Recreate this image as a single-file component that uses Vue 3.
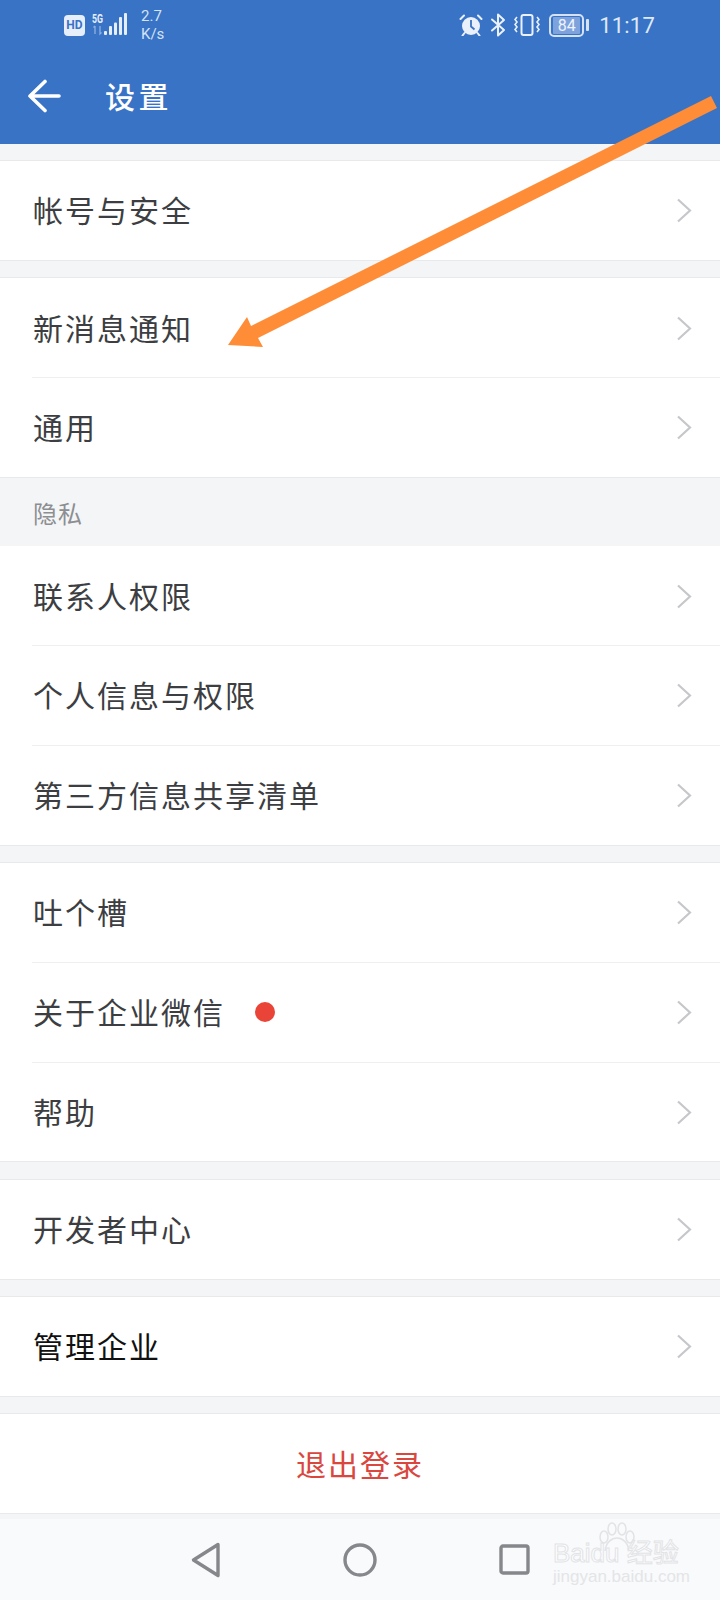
<script setup>
const groups = [
  { rows: [{ label: '帐号与安全' }] },
  { rows: [{ label: '新消息通知' }, { label: '通用' }] },
  { title: '隐私', rows: [{ label: '联系人权限' }, { label: '个人信息与权限' }, { label: '第三方信息共享清单' }] },
  { rows: [{ label: '吐个槽' }, { label: '关于企业微信', dot: true }, { label: '帮助' }] },
  { rows: [{ label: '开发者中心' }] },
  { rows: [{ label: '管理企业', dark: true }] }
]
</script>

<template>
  <div class="page">
    <header class="header">
      <div class="status">
        <span class="hd">HD</span>
        <svg class="signal" width="36" height="24" viewBox="0 0 36 24">
          <text x="0" y="11" textLength="11" lengthAdjust="spacingAndGlyphs" class="five-g">5G</text>
          <path d="M3 14v8M1.500 15.500 3 14M8 14v8l1.500-1.500" fill="none" stroke="#8fb1e2" stroke-width="1.300" />
          <rect x="12" y="19" width="3" height="4" rx="1" fill="#e6eefa" />
          <rect x="17" y="14" width="3" height="9" rx="1" fill="#e6eefa" />
          <rect x="22" y="10.500" width="3" height="12.500" rx="1" fill="#e6eefa" />
          <rect x="27" y="5" width="3" height="18" rx="1" fill="#e6eefa" />
          <rect x="32" y="1" width="3" height="22" rx="1" fill="#e6eefa" />
        </svg>
        <span class="speed">2.7<br>K/s</span>
        <div class="status-right">
          <svg width="24" height="22" viewBox="0 0 24 22">
            <circle cx="12" cy="12" r="9" fill="#eaf1fb" />
            <path d="M12 6v6.500l3.500 3" fill="none" stroke="#3873c5" stroke-width="1.800" />
            <path d="M1.500 5 5 1.500M22.500 5 19 1.500M5.500 19l-2 2.500M18.500 19l2 2.500" fill="none" stroke="#eaf1fb" stroke-width="2" stroke-linecap="round" />
          </svg>
          <svg class="bt" width="16" height="24" viewBox="0 0 16 24">
            <path d="M2 6.500 14 17 8 22.500V1.500l6 5.500L2 17.500" fill="none" stroke="#eaf1fb" stroke-width="2" stroke-linejoin="round" stroke-linecap="round" />
          </svg>
          <svg class="vib" width="26" height="22" viewBox="0 0 26 22">
            <rect x="7.500" y="1" width="11" height="20" rx="2" fill="none" stroke="#eaf1fb" stroke-width="2" />
            <path d="M3 3 1 5.500 3 8 1 10.500 3 13 1 15.500 3 18M23 3l2 2.500L23 8l2 2.500L23 13l2 2.500L23 18" fill="none" stroke="#eaf1fb" stroke-width="1.600" />
          </svg>
          <div class="battery">
            <div class="battery-body"><span>84</span></div>
            <i class="battery-cap"></i>
          </div>
          <span class="clock">11:17</span>
        </div>
      </div>
      <div class="toolbar">
        <svg width="34" height="34" viewBox="0 0 34 34">
          <path d="M18 2.500 3 17l15 14.500M3 17h29" fill="none" stroke="#fff" stroke-width="3.600" stroke-linecap="round" stroke-linejoin="round" />
        </svg>
        <span class="title">设置</span>
      </div>
    </header>

    <main class="list">
      <template v-for="(group, i) in groups" :key="i">
        <div v-if="group.title" class="section-title">{{ group.title }}</div>
        <section class="group" :class="{ 'group--titled': group.title }">
          <div v-for="row in group.rows" :key="row.label" class="row">
            <span class="row__label" :class="{ 'row__label--dark': row.dark }">{{ row.label }}</span>
            <i v-if="row.dot" class="dot"></i>
            <svg class="chevron" width="16" height="25" viewBox="0 0 16 25">
              <path d="M2 1.500 14 12.500 2 23.500" fill="none" stroke="#c5c7ca" stroke-width="2.200" />
            </svg>
          </div>
        </section>
      </template>
      <section class="group logout"><span>退出登录</span></section>
    </main>

    <footer class="nav">
      <svg width="30" height="36" viewBox="0 0 30 36">
        <path d="M27 2.500 2.500 18 27 33.500Z" fill="none" stroke="#85878a" stroke-width="3.400" stroke-linejoin="round" />
      </svg>
      <svg width="34" height="34" viewBox="0 0 34 34">
        <circle cx="17" cy="17" r="15" fill="none" stroke="#85878a" stroke-width="3.400" />
      </svg>
      <svg width="31" height="31" viewBox="0 0 31 31">
        <rect x="2" y="2" width="27" height="27" rx="2" fill="none" stroke="#85878a" stroke-width="3.400" />
      </svg>
      <div class="watermark">
        <svg class="paw" width="40" height="30" viewBox="0 0 40 30">
          <g fill="none" stroke="#e2e3e6" stroke-width="1.500">
            <ellipse cx="7" cy="15" rx="4" ry="6" />
            <ellipse cx="15" cy="7" rx="4" ry="6" />
            <ellipse cx="25" cy="7" rx="4" ry="6" />
            <ellipse cx="33" cy="15" rx="4" ry="6" />
            <path d="M8 29c1-9 7-13 12-13s11 4 12 13" />
          </g>
        </svg>
        <div class="wm-main">Bai<b>du</b> 经验</div>
        <div class="wm-url">jingyan.baidu.com</div>
      </div>
    </footer>

    <svg class="annotation" width="720" height="360" viewBox="0 0 720 360">
      <polygon points="711,96 717,108 258,338 263,347 228,345 247,317 251,326" fill="#ff8c37" />
    </svg>
  </div>
</template>

<style>
html, body {
  margin: 0;
  background: #f4f5f7;
}
</style>

<style scoped>
.page {
  position: relative;
  width: 720px;
  height: 1600px;
  display: flex;
  flex-direction: column;
  overflow: hidden;
  background: #f4f5f7;
  font-family: "Noto Sans CJK SC", "Noto Sans", sans-serif;
}

.header {
  background: #3873c5;
  flex: none;
}

.status {
  height: 48px;
  display: flex;
  align-items: center;
  padding: 0 65px 0 64px;
  color: #e6eefa;
  font-family: Roboto, sans-serif;
}

.hd {
  width: 21px;
  height: 21px;
  margin-top: 2px;
  border-radius: 4px;
  background: #e6eefa;
  color: #3873c5;
  font-size: 12px;
  font-weight: 700;
  line-height: 21px;
  text-align: center;
}

.signal {
  margin: 0 0 0 7px;
}

.five-g {
  fill: #e6eefa;
  font-family: Roboto, sans-serif;
  font-size: 12px;
  font-weight: 700;
}

.speed {
  margin: 2px 0 0 13px;
  font-size: 15px;
  line-height: 18px;
  color: #d5e2f5;
}

.status-right {
  margin: 2px 0 0 auto;
  display: flex;
  align-items: center;
}

.bt {
  margin-left: 7px;
}

.vib {
  margin-left: 8px;
}

.battery {
  margin-left: 9px;
  display: flex;
  align-items: center;
}

.battery-body {
  width: 27px;
  height: 17px;
  border: 2px solid #d5e2f5;
  border-radius: 5px;
  padding: 1px 2px;
  display: flex;
}

.battery-body span {
  flex: 1;
  border-radius: 1px;
  background: #7ea3dc;
  color: #eef4fc;
  font-size: 16px;
  line-height: 17px;
  text-align: center;
}

.battery-cap {
  width: 3px;
  height: 12px;
  margin-left: 2px;
  border-radius: 1px;
  background: #d5e2f5;
}

.clock {
  margin-left: 10px;
  font-size: 22px;
  letter-spacing: 0.2px;
  color: #dfe9f8;
}

.toolbar {
  height: 96px;
  display: flex;
  align-items: center;
  padding-left: 27px;
}

.title {
  margin: -2px 0 0 44px;
  color: #fff;
  font-size: 30px;
  font-weight: 500;
  letter-spacing: 3.5px;
}

.list {
  flex: 1;
  display: flex;
  flex-direction: column;
  gap: 16.5px;
  padding-top: 16px;
}

.section-title {
  height: 68.5px;
  margin-top: -16.5px;
  margin-bottom: -16.5px;
  padding-left: 33px;
  display: flex;
  align-items: center;
  color: #8c8e92;
  font-size: 24px;
  letter-spacing: 1px;
}

.group {
  background: #fff;
  border-top: 1px solid #e8e9ec;
  border-bottom: 1px solid #e8e9ec;
}

.group--titled {
  border-top: 0;
}

.row {
  height: 98.75px;
  margin-left: 32px;
  padding-right: 28px;
  display: flex;
  align-items: center;
  border-bottom: 1px solid #eeeff1;
}

.row:last-child {
  border-bottom: 0;
}

.row__label {
  margin: -2px 0 0 1px;
  color: #3c3e42;
  font-size: 30px;
  letter-spacing: 2px;
}

.row__label--dark {
  color: #111;
}

.dot {
  width: 20px;
  height: 20px;
  margin-left: 30px;
  border-radius: 50%;
  background: #ea4438;
}

.chevron {
  margin: 1px 0 0 auto;
}

.logout {
  height: 99px;
  display: flex;
  align-items: center;
  justify-content: center;
  color: #d9473f;
  font-size: 30px;
  letter-spacing: 2px;
}

.logout span {
  margin-top: -2px;
}

.nav {
  position: relative;
  height: 81px;
  flex: none;
  display: flex;
  align-items: center;
  padding-left: 191px;
  gap: 122px;
  background: #f9fafb;
}

.watermark {
  position: absolute;
  left: 553px;
  top: 3px;
  width: 130px;
  color: #fff;
  -webkit-text-stroke: 1px #e2e3e6;
  font-family: "Liberation Sans", sans-serif;
}

.paw {
  position: absolute;
  left: 44px;
  top: 0;
}

.wm-main {
  margin-top: 17px;
  font-size: 26px;
  line-height: 28px;
  white-space: nowrap;
  font-family: "Liberation Sans", "Noto Sans CJK SC", sans-serif;
}

.wm-main b {
  font-weight: 400;
}

.wm-url {
  font-size: 17px;
  line-height: 19px;
  white-space: nowrap;
  -webkit-text-stroke: 0;
  color: #e4e5e8;
}

.annotation {
  position: absolute;
  left: 0;
  top: 0;
  pointer-events: none;
}
</style>
